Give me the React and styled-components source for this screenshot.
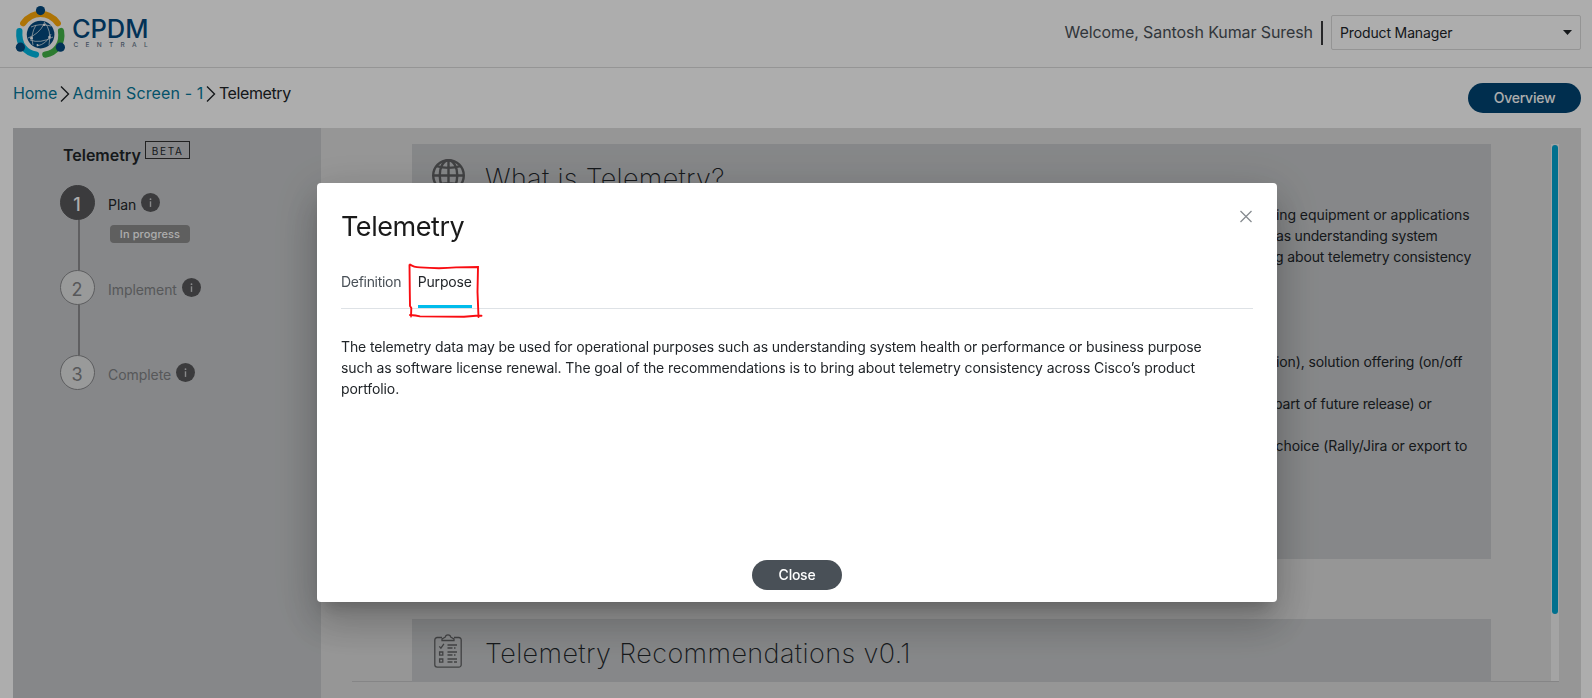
import React from "react";
import styled, { createGlobalStyle } from "styled-components";

const GlobalStyle = createGlobalStyle`
  *, *::before, *::after { box-sizing: border-box; }
  body {
    margin: 0;
    background: #fff;
    color: #212529;
    font-family: Inter, "Liberation Sans", sans-serif;
    font-size: 14px;
    overflow: hidden;
  }
  h1, h2, h3, p { margin: 0; }
  button { font-family: inherit; cursor: pointer; }
`;

const Page = styled.div`
  height: 698px;
  display: flex;
  flex-direction: column;
  overflow: hidden;
`;

const Header = styled.header`
  height: 68px;
  flex: none;
  display: flex;
  justify-content: space-between;
  border-bottom: 1px solid #dcdcdc;
  padding: 0 11px 0 14px;
`;

const Brand = styled.div`
  display: flex;
`;

const BrandText = styled.div`
  display: flex;
  flex-direction: column;
  margin-left: 5px;
  padding-top: 16px;
  color: #044b80;
`;

const BrandName = styled.span`
  font-size: 25.5px;
  font-weight: 500;
  line-height: 25px;
  letter-spacing: -0.1px;
`;

const BrandSub = styled.span`
  margin-left: 1.5px;
  font-size: 6.5px;
  font-weight: 500;
  line-height: 8px;
  letter-spacing: 7.3px;
  color: #66788c;
`;

const Account = styled.div`
  display: flex;
  align-items: flex-start;
`;

const Welcome = styled.span`
  margin: 22px 8px 0 0;
  font-size: 16px;
  line-height: 20px;
  letter-spacing: -0.09px;
  color: #495057;
`;

const Divider = styled.span`
  width: 2px;
  height: 24px;
  margin: 21px 8px 0 0;
  background: #39393b;
`;

const RoleSelect = styled.div`
  width: 250px;
  height: 35px;
  margin-top: 15px;
  padding: 0 8px;
  display: flex;
  align-items: center;
  justify-content: space-between;
  border: 1px solid #dadada;
  border-radius: 2px;
  letter-spacing: -0.14px;
`;

const RoleName = styled.span`
  padding-bottom: 1px;
`;

const SubHeader = styled.div`
  height: 60px;
  flex: none;
  display: flex;
  justify-content: space-between;
  padding: 15px 11px 0 13px;
`;

const Breadcrumb = styled.nav`
  height: 20px;
  display: flex;
  align-items: center;
  font-size: 16px;
  line-height: 20px;
`;

const Crumb = styled.span`
  color: ${(p) => (p.$current ? "#212529" : "#077a9c")};
  letter-spacing: ${(p) => p.$spacing};
`;

const Chevron = styled.svg`
  width: 10px;
  height: 18px;
  margin: 1px 3px 0 2.5px;
`;

const PillButton = styled.button`
  width: ${(p) => p.$width}px;
  height: 30px;
  padding: 0 0 2px;
  border: 0;
  border-radius: 15px;
  background: ${(p) => p.$color};
  color: #fff;
  font-size: 14px;
  font-weight: 500;
  letter-spacing: -0.25px;
`;

const Workspace = styled.main`
  flex: 1;
  min-height: 0;
  margin: 0 11px 0 13px;
  display: flex;
  background: #dedede;
`;

const Sidebar = styled.aside`
  width: 308px;
  flex: none;
  padding: 13px 0 0 47px;
  background: #c6c8ca;
`;

const SidebarTitle = styled.div`
  height: 44px;
  display: flex;
  align-items: flex-start;
  gap: 4px;
  padding-left: 3px;
`;

const TitleText = styled.h3`
  font-size: 16px;
  font-weight: 600;
  line-height: 28px;
  letter-spacing: -0.02px;
`;

const BetaTag = styled.span`
  width: 45px;
  height: 18px;
  border: 1px solid #333;
  padding-left: 6px;
  font-size: 10px;
  line-height: 19px;
  letter-spacing: 1.7px;
`;

const Step = styled.div`
  height: 85px;
  display: flex;
`;

const StepRail = styled.div`
  width: 35px;
  display: flex;
  flex-direction: column;
  align-items: center;
`;

const StepCircle = styled.span`
  width: 35px;
  height: 35px;
  flex: none;
  display: flex;
  align-items: center;
  justify-content: center;
  border: 1px solid ${(p) => (p.$active ? "#58585b" : "#88898c")};
  border-radius: 50%;
  background: ${(p) => (p.$active ? "#58585b" : "#e2e3e4")};
  color: ${(p) => (p.$active ? "#fff" : "#808285")};
  font-size: 18px;
  font-weight: ${(p) => (p.$active ? 500 : 400)};
  padding: 3px 1px 0 0;
`;

const StepLine = styled.span`
  width: 2px;
  flex: 1;
  margin-left: 3px;
  background: #8c8d8f;
`;

const StepBody = styled.div`
  padding-left: 13px;
`;

const StepHead = styled.div`
  height: 35px;
  display: flex;
  align-items: center;
  gap: 5px;
`;

const StepLabel = styled.span`
  padding-top: 4px;
  letter-spacing: -0.06px;
  color: ${(p) => (p.$active ? "#212529" : "#808285")};
`;

const InfoDot = styled.svg`
  width: 19px;
  height: 19px;
`;

const StatusBadge = styled.span`
  display: block;
  width: 80px;
  height: 18px;
  margin: 5px 0 0 2px;
  border-radius: 4px;
  background: #8c8c8c;
  color: #fff;
  font-size: 11px;
  font-weight: 500;
  line-height: 18px;
  letter-spacing: 0.1px;
  text-align: center;
`;

const Scroller = styled.section`
  width: 1207px;
  height: 538px;
  margin: 16px 0 0 31px;
  display: flex;
  justify-content: space-between;
  border-bottom: 1px solid #c4c4c6;
`;

const CardList = styled.div`
  width: 1079px;
  height: 538px;
  margin-left: 60px;
  overflow: hidden;
`;

const Card = styled.article`
  height: ${(p) => p.$height}px;
  margin-bottom: 60px;
  background: #c6c8ca;
`;

const CardHead = styled.div`
  height: 60px;
  display: flex;
  align-items: flex-start;
  gap: ${(p) => p.$gap}px;
  padding: 15px 0 0 ${(p) => p.$indent}px;
`;

const CardTitle = styled.h2`
  padding-top: 4px;
  font-size: 27px;
  font-weight: 200;
  line-height: 32px;
  letter-spacing: ${(p) => p.$spacing}px;
`;

const CardText = styled.p`
  margin: 0 0 ${(p) => p.$after}px ${(p) => p.$start}px;
  line-height: 21px;
  letter-spacing: ${(p) => p.$spacing}px;
  white-space: nowrap;
`;

const CardIcon = styled.svg`
  flex: none;
`;

const Track = styled.div`
  width: 8px;
  height: 537px;
  padding: 1px;
  background: #f2f2f2;
`;

const Thumb = styled.div`
  height: 469px;
  border-radius: 3px;
  background: #00a5d2;
`;

const Backdrop = styled.div`
  position: fixed;
  inset: 0;
  padding: 183px 0 0 317px;
  background: rgba(0, 0, 0, 0.32);
`;

const Dialog = styled.div`
  width: 960px;
  height: 419px;
  display: flex;
  flex-direction: column;
  padding: 24px 24px 12px;
  border-radius: 4px;
  background: #fff;
  box-shadow: 0 11px 15px -7px rgba(0, 0, 0, 0.2),
    0 24px 38px 3px rgba(0, 0, 0, 0.14), 0 9px 46px 8px rgba(0, 0, 0, 0.12);
`;

const DialogHead = styled.div`
  height: 65px;
  display: flex;
  justify-content: space-between;
`;

const DialogTitle = styled.h1`
  color: #1a1a1a;
  font-size: 27px;
  font-weight: 400;
  line-height: 39px;
  letter-spacing: -0.45px;
`;

const CloseIcon = styled.svg`
  width: 13px;
  height: 13px;
  margin-top: 3px;
`;

const TabBar = styled.div`
  height: 37px;
  display: flex;
  gap: 16.5px;
  border-bottom: 1px solid #dee2e6;
`;

const Tab = styled.div`
  position: relative;
  height: 36px;
  line-height: 20px;
  letter-spacing: ${(p) => (p.$active ? "-0.15px" : "-0.3px")};
  color: ${(p) => (p.$active ? "#212529" : "#495057")};
  border-bottom: 3px solid ${(p) => (p.$active ? "#00bceb" : "transparent")};
`;

const Annotation = styled.svg`
  position: absolute;
  left: -12px;
  top: -10px;
  width: 78px;
  height: 58px;
  overflow: visible;
`;

const DialogText = styled.p`
  flex: 1;
  padding-top: 27px;
  line-height: 21px;
  white-space: nowrap;
`;

const TextLine = styled.span`
  display: block;
  letter-spacing: ${(p) => p.$spacing}px;
`;

const DialogActions = styled.div`
  display: flex;
  justify-content: center;
`;

function Logo() {
  return (
    <svg width="53" height="62" viewBox="14 0 53 62" fill="none">
      <g strokeWidth="6.2" strokeLinecap="round">
        <path d="M23.2 23.2Q30 13.8 40.5 13.8T57.8 23.2" stroke="#ffab0a" />
        <path d="M19.4 31C18 45 26 53 36 54.6" stroke="#00b9e4" />
        <path d="M61 31C63 44 56 53 45.3 54.6" stroke="#43b649" />
      </g>
      <g fill="#044b80">
        <circle cx="40.5" cy="10.6" r="4.6" />
        <circle cx="20.4" cy="47.2" r="4.6" />
        <circle cx="60.4" cy="47.2" r="4.6" />
        <circle cx="40.6" cy="34.6" r="13.8" />
      </g>
      <g stroke="#fff" strokeWidth=".7">
        <path d="M31 27q8-4 20-1M28 38q11-4 16-14M33 45q-3-10 3-20M30 40q10 4 23-3M37 46q10-2 14-12M44 22q8 8 5 23" />
      </g>
      <g fill="#fff">
        <circle cx="44.2" cy="24.8" r="1.3" />
        <circle cx="31.5" cy="38.2" r="1.4" />
        <circle cx="49.5" cy="37" r="1.3" />
        <circle cx="37.5" cy="45" r="1" />
      </g>
    </svg>
  );
}

function CrumbChevron() {
  return (
    <Chevron viewBox="0 0 10 18" fill="none" stroke="#212529" strokeWidth="1.4">
      <path d="M1 1.5L8.5 9L1 16.5" />
    </Chevron>
  );
}

function Info() {
  return (
    <InfoDot viewBox="0 0 19 19">
      <circle cx="9.5" cy="9.5" r="9.5" fill="#58585b" />
      <circle cx="9.5" cy="6.2" r="0.9" fill="#c9cacc" />
      <path d="M9.5 8.3v5.6" stroke="#c9cacc" strokeWidth="1.4" />
    </InfoDot>
  );
}

function GlobeIcon() {
  return (
    <CardIcon width="33" height="33" viewBox="0 0 33 33" fill="none" stroke="#616264" strokeWidth="2.4">
      <circle cx="16.5" cy="16.5" r="15.3" />
      <ellipse cx="16.5" cy="16.5" rx="8.8" ry="15.3" />
      <path d="M16.5 1v31M1 16.5h31M4.5 7.2q12 3.4 24 0M4.5 25.8q12-3.4 24 0" />
    </CardIcon>
  );
}

function ClipboardIcon() {
  return (
    <CardIcon width="28" height="34" viewBox="0 0 28 34" fill="none" stroke="#616264" strokeWidth="1.3">
      <path d="M8 3.5H3.2a2.4 2.4 0 0 0-2.4 2.4v24.8a2.4 2.4 0 0 0 2.4 2.4h21.6a2.4 2.4 0 0 0 2.4-2.4V5.9a2.4 2.4 0 0 0-2.4-2.4H20" />
      <path d="M8 6.5V5l3.2-1.8Q11.6.8 14 .8t2.8 2.4L20 5v1.5z" />
      <path d="M5.3 12.4l1.6 1.8 3-4.4M5.6 18h3.2v3.2H5.6zM5.6 25h3.2v3.2H5.6z" />
      <path d="M13.5 11h9.5M13.5 14h5M20 14h1.5M13.5 18h9.5M13.5 21h5M20 21h1.5M13.5 25h9.5M13.5 28h5M20 28h3" />
    </CardIcon>
  );
}

const steps = [
  { number: 1, label: "Plan", active: true, status: "In progress" },
  { number: 2, label: "Implement" },
  { number: 3, label: "Complete" },
];

const overviewLines = [
  { text: "ing equipment or applications", start: 864, spacing: -0.08, after: 0 },
  { text: "as understanding system", start: 864, spacing: -0.2, after: 0 },
  { text: "g about telemetry consistency", start: 863, spacing: -0.13, after: 84 },
  { text: "ion), solution offering (on/off", start: 864, spacing: -0.11, after: 21 },
  { text: "part of future release) or", start: 862, spacing: -0.19, after: 21 },
  { text: "choice (Rally/Jira or export to", start: 863.5, spacing: -0.05, after: 0 },
];

export default function App() {
  return (
    <>
      <GlobalStyle />
      <Page>
        <Header>
          <Brand>
            <Logo />
            <BrandText>
              <BrandName>CPDM</BrandName>
              <BrandSub>CENTRAL</BrandSub>
            </BrandText>
          </Brand>
          <Account>
            <Welcome>Welcome, Santosh Kumar Suresh</Welcome>
            <Divider />
            <RoleSelect>
              <RoleName>Product Manager</RoleName>
              <svg width="9" height="5" viewBox="0 0 9 5">
                <path d="M0 0h9L4.5 5z" fill="#212529" />
              </svg>
            </RoleSelect>
          </Account>
        </Header>

        <SubHeader>
          <Breadcrumb>
            <Crumb $spacing="-0.2px">Home</Crumb>
            <CrumbChevron />
            <Crumb $spacing="0.13px">Admin Screen - 1</Crumb>
            <CrumbChevron />
            <Crumb $current $spacing="-0.4px">Telemetry</Crumb>
          </Breadcrumb>
          <PillButton $width={113} $color="#004573">Overview</PillButton>
        </SubHeader>

        <Workspace>
          <Sidebar>
            <SidebarTitle>
              <TitleText>Telemetry</TitleText>
              <BetaTag>BETA</BetaTag>
            </SidebarTitle>
            {steps.map((step, i) => (
              <Step key={step.number}>
                <StepRail>
                  <StepCircle $active={step.active}>{step.number}</StepCircle>
                  {i < steps.length - 1 && <StepLine />}
                </StepRail>
                <StepBody>
                  <StepHead>
                    <StepLabel $active={step.active}>{step.label}</StepLabel>
                    <Info />
                  </StepHead>
                  {step.status && <StatusBadge>{step.status}</StatusBadge>}
                </StepBody>
              </Step>
            ))}
          </Sidebar>

          <Scroller>
            <CardList>
              <Card $height={415}>
                <CardHead $indent={20} $gap={20}>
                  <GlobeIcon />
                  <CardTitle $spacing={0.32}>What is Telemetry?</CardTitle>
                </CardHead>
                {overviewLines.map((line) => (
                  <CardText key={line.text} $start={line.start} $spacing={line.spacing} $after={line.after}>
                    {line.text}
                  </CardText>
                ))}
              </Card>
              <Card $height={63}>
                <CardHead $indent={22} $gap={23}>
                  <ClipboardIcon />
                  <CardTitle $spacing={0.4}>Telemetry Recommendations v0.1</CardTitle>
                </CardHead>
              </Card>
            </CardList>
            <Track>
              <Thumb />
            </Track>
          </Scroller>
        </Workspace>
      </Page>

      <Backdrop>
        <Dialog role="dialog" aria-label="Telemetry">
          <DialogHead>
            <DialogTitle>Telemetry</DialogTitle>
            <CloseIcon viewBox="0 0 13 13" stroke="#868b90" strokeWidth="1.3">
              <path d="M.5 1l11 11M11.5 1L.5 12" />
            </CloseIcon>
          </DialogHead>
          <TabBar>
            <Tab>Definition</Tab>
            <Tab $active>
              Purpose
              <Annotation viewBox="0 0 78 58" fill="none" stroke="#f90d12" strokeWidth="1.9" strokeLinecap="round">
                <path d="M4 2.5Q7.5 5.2 14 5.4Q34 7 50 5.4L72 5L71.5 30L72.5 55M3.5 3L3.8 30L4 44L5.3 46L5 54.5M4 53Q10 53.5 14 54.4L58 54.8L70 53.8H75.5" />
              </Annotation>
            </Tab>
          </TabBar>
          <DialogText>
            <TextLine $spacing={-0.132}>
              The telemetry data may be used for operational purposes such as understanding system health or performance or business purpose
            </TextLine>
            <TextLine $spacing={-0.095}>
              such as software license renewal. The goal of the recommendations is to bring about telemetry consistency across Cisco’s product
            </TextLine>
            <TextLine $spacing={-0.1}>portfolio.</TextLine>
          </DialogText>
          <DialogActions>
            <PillButton $width={90} $color="#495057">Close</PillButton>
          </DialogActions>
        </Dialog>
      </Backdrop>
    </>
  );
}
